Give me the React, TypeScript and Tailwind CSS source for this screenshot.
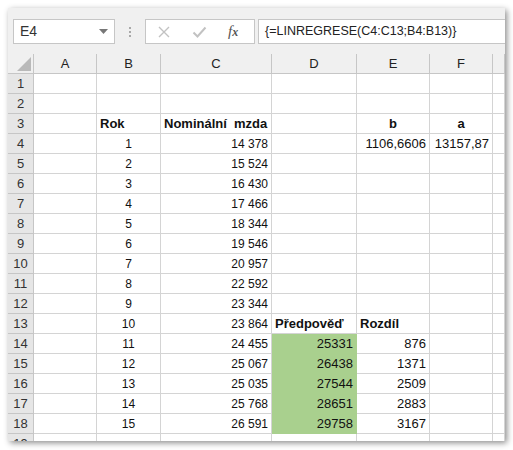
import React from 'react'

const cols = [
  { key: 'A', w: 'w-[63px]' },
  { key: 'B', w: 'w-[64px]' },
  { key: 'C', w: 'w-[111px]' },
  { key: 'D', w: 'w-[85px]' },
  { key: 'E', w: 'w-[73px]' },
  { key: 'F', w: 'w-[63px]' },
  { key: 'G', w: 'w-[12px]' },
]

type Cell = {
  text?: string
  bold?: boolean
  align?: 'left' | 'center' | 'right'
  green?: boolean
  small?: boolean
}

const mzdy = [
  '14 378',
  '15 524',
  '16 430',
  '17 466',
  '18 344',
  '19 546',
  '20 957',
  '22 592',
  '23 344',
  '23 864',
  '24 455',
  '25 067',
  '25 035',
  '25 768',
  '26 591',
]

const predpoved = ['25331', '26438', '27544', '28651', '29758']
const rozdil = ['876', '1371', '2509', '2883', '3167']

const buildRows = (): Record<string, Cell>[] => {
  const rows: Record<string, Cell>[] = []
  for (let r = 1; r <= 19; r++) {
    const row: Record<string, Cell> = {}
    if (r === 3) {
      row.B = { text: 'Rok', bold: true, align: 'left' }
      row.C = { text: 'Nominální  mzda', bold: true, align: 'left' }
      row.E = { text: 'b', bold: true, align: 'center' }
      row.F = { text: 'a', bold: true, align: 'center' }
    }
    if (r >= 4 && r <= 18) {
      row.B = { text: String(r - 3), align: 'center', small: true }
      row.C = { text: mzdy[r - 4], align: 'right', small: true }
    }
    if (r === 4) {
      row.E = { text: '1106,6606', align: 'right' }
      row.F = { text: '13157,87', align: 'right' }
    }
    if (r === 13) {
      row.D = { text: 'Předpověď', bold: true, align: 'left' }
      row.E = { text: 'Rozdíl', bold: true, align: 'left' }
    }
    if (r >= 14 && r <= 18) {
      row.D = { text: predpoved[r - 14], align: 'right', green: true }
      row.E = { text: rozdil[r - 14], align: 'right' }
    }
    rows.push(row)
  }
  return rows
}

const rows = buildRows()

const GridCell = ({ cell, w }: { cell?: Cell; w: string }) => {
  const align =
    cell?.align === 'center'
      ? 'justify-center'
      : cell?.align === 'right'
        ? 'justify-end pr-[3px]'
        : 'justify-start pl-[3px]'
  return (
    <div
      className={`${w} h-[20px] shrink-0 flex items-center border-r border-b whitespace-pre overflow-visible text-[#111] ${align} ${
        cell?.green
          ? 'bg-[#a9d08e] border-r-[#a9d08e] border-b-[#a9d08e]'
          : 'bg-white border-[#d4d4d4]'
      } ${cell?.bold ? 'font-bold text-[13px]' : cell?.small ? 'text-[12px]' : 'text-[13px]'}`}
    >
      {cell?.text}
    </div>
  )
}

export default function App() {
  return (
    <div className="min-h-[450px] bg-white p-2 font-['Liberation_Sans',Arial,sans-serif]">
      <div className="w-[497px] h-[433px] bg-[#f0f0f0] shadow-[2px_2px_6px_rgba(0,0,0,0.45)] overflow-hidden flex flex-col">
        {/* formula bar */}
        <div className="h-[46px] shrink-0 flex items-start pt-[11px] pl-[5px]">
          <div className="w-[102px] h-[25px] bg-white border border-[#c6c6c6] flex items-center justify-between pl-[6px] pr-[6px]">
            <span className="text-[14px] text-[#333]">E4</span>
            <svg width="9" height="5" viewBox="0 0 9 5">
              <polygon points="0,0 9,0 4.5,5" fill="#777" />
            </svg>
          </div>
          <div className="w-[30px] h-[25px] flex flex-col items-center justify-center gap-[2px]">
            <span className="w-[2px] h-[2px] bg-[#a8a8a8]" />
            <span className="w-[2px] h-[2px] bg-[#a8a8a8]" />
            <span className="w-[2px] h-[2px] bg-[#a8a8a8]" />
          </div>
          <div className="w-[110px] h-[25px] bg-white border border-[#c6c6c6] flex items-center pl-[11px]">
            <svg width="14" height="14" viewBox="0 0 14 14">
              <path d="M2 2 L12 12 M12 2 L2 12" stroke="#c2c2c2" strokeWidth="1.4" />
            </svg>
            <svg width="15" height="14" viewBox="0 0 15 14" className="ml-[21px]">
              <path d="M1.5 7.5 L5.5 11.5 L13.5 2.5" stroke="#c2c2c2" strokeWidth="2" fill="none" />
            </svg>
            <span className="ml-[21px] font-['Liberation_Serif',serif] italic text-[15px] text-[#555] leading-none">
              f<span className="text-[12px] font-bold">x</span>
            </span>
          </div>
          <div className="ml-[3px] flex-1 h-[25px] bg-white border border-[#c6c6c6] border-r-0 flex items-center pl-[6px]">
            <span className="text-[12.5px] text-[#222]">{'{=LINREGRESE(C4:C13;B4:B13)}'}</span>
          </div>
        </div>

        {/* column headers */}
        <div className="flex h-[20px] shrink-0">
          <div className="w-[26px] h-[20px] shrink-0 bg-[#f0f0f0] border-r border-b border-[#c6c6c6] flex items-end justify-end pr-[2px] pb-[2px]">
            <svg width="14" height="14" viewBox="0 0 14 14">
              <polygon points="14,0 14,14 0,14" fill="#b9b9b9" />
            </svg>
          </div>
          {cols.map((c) => (
            <div
              key={c.key}
              className={`${c.w} h-[20px] shrink-0 bg-[#f0f0f0] border-r border-b border-[#c6c6c6] flex items-center justify-center text-[13px] text-[#222]`}
            >
              {c.key !== 'G' ? c.key : ''}
            </div>
          ))}
        </div>

        {/* rows */}
        <div className="flex flex-col">
          {rows.map((row, i) => (
            <div key={i} className="flex h-[20px] shrink-0">
              <div className="w-[26px] h-[20px] shrink-0 bg-[#e6e6e6] border-r border-b border-[#c6c6c6] flex items-center justify-center text-[13px] text-[#333]">
                {i + 1}
              </div>
              {cols.map((c) => (
                <GridCell key={c.key} cell={row[c.key]} w={c.w} />
              ))}
            </div>
          ))}
        </div>
      </div>
    </div>
  )
}
